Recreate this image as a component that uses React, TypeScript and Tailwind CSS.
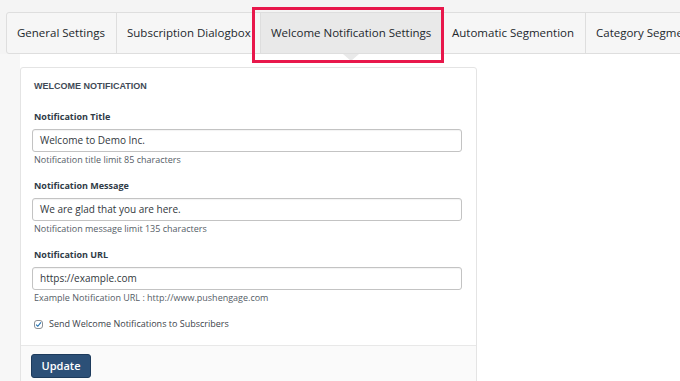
import React from 'react'

const tabs = [
  { label: 'General Settings', w: 'w-[110px]' },
  { label: 'Subscription Dialogbox', w: 'w-[144px]' },
  { label: 'Welcome Notification Settings', w: 'w-[181px]', active: true },
  { label: 'Automatic Segmention', w: 'w-[144px]' },
  { label: 'Category Segmentation', w: 'w-[160px]' },
]

const fields = [
  {
    label: 'Notification Title',
    value: 'Welcome to Demo Inc.',
    help: 'Notification title limit 85 characters',
  },
  {
    label: 'Notification Message',
    value: 'We are glad that you are here.',
    help: 'Notification message limit 135 characters',
  },
  {
    label: 'Notification URL',
    value: 'https://example.com',
    help: 'Example Notification URL : http://www.pushengage.com',
  },
]

export default function App() {
  return (
    <div className="relative w-[680px] h-[381px] overflow-hidden bg-[#f4f4f4] font-['Open_Sans',sans-serif] text-[#23282d]">
      {/* Tabs */}
      <div className="pt-[12px] pl-[6px]">
        <div className="flex h-[42px] w-[700px] border border-[#dedede] rounded-l-[3px] bg-[#f6f6f6]">
          {tabs.map((tab) => (
            <div
              key={tab.label}
              className={`relative flex shrink-0 items-center pl-[10px] border-r border-[#dedede] text-[11.5px] whitespace-nowrap ${tab.w} ${
                tab.active ? 'bg-[#e9e9e9]' : ''
              }`}
            >
              {tab.label}
              {tab.active && (
                <span className="absolute left-1/2 -translate-x-1/2 bottom-[-8px] w-0 h-0 border-l-[8px] border-r-[8px] border-t-[7px] border-l-transparent border-r-transparent border-t-[#e9e9e9]" />
              )}
            </div>
          ))}
        </div>
      </div>

      {/* Highlight box */}
      <div className="absolute left-[252px] top-[7px] w-[192px] h-[56px] border-[3px] border-[#e8174b]" />

      {/* Body */}
      <div className="flex h-full">
        <div className="w-[20px] shrink-0 bg-[#f7f7f7]" />
        <div className="flex-1 bg-white pt-[13px]">
          <div className="w-[457px] border border-[#e4e4e4] rounded-t-[3px] bg-white">
            <div className="pt-[13px] pb-[14px] pl-[11px] pr-[14px] border-b border-[#e8e8e8]">
              <div className="ml-[2px] h-[11px] leading-[11px] text-[9px] font-bold uppercase text-[#3f4a56] font-['Liberation_Sans',Arial,sans-serif]">
                Welcome Notification
              </div>

              {fields.map((f, i) => (
                <div key={f.label} className={i === 0 ? 'mt-[18px]' : 'mt-[13px]'}>
                  <div className="ml-[2px] h-[14px] leading-[14px] text-[9px] font-bold text-[#2f3b47]">
                    {f.label}
                  </div>
                  <div className="mt-[5px] flex items-center h-[23px] w-[430px] border border-[#c3c3c3] rounded-[3px] px-[7px] text-[10px] text-[#32373c] shadow-[inset_0_1px_1px_rgba(0,0,0,0.05)]">
                    {f.value}
                  </div>
                  <div className="ml-[2px] mt-[2px] h-[12px] leading-[12px] text-[9px] text-[#555d66]">
                    {f.help}
                  </div>
                </div>
              ))}

              <div className="mt-[13px] ml-[2px] flex items-center h-[14px] gap-[6px]">
                <span className="flex items-center justify-center w-[9px] h-[9px] rounded-[3px] border border-[#8c8f94] bg-white">
                  <svg viewBox="0 0 10 10" className="w-[7px] h-[7px]">
                    <path d="M1.5 5.2 L4 7.5 L8.5 2" fill="none" stroke="#2271b1" strokeWidth="1.6" />
                  </svg>
                </span>
                <span className="text-[9px] text-[#3c434a]">Send Welcome Notifications to Subscribers</span>
              </div>
            </div>

            <div className="bg-[#fafafa] pt-[6px] pl-[10px] h-[40px]">
              <button className="w-[60px] h-[24px] rounded-[3px] bg-[#2c5077] border border-[#1d3b5c] text-white text-[11px] font-semibold">
                Update
              </button>
            </div>
          </div>
        </div>
      </div>
    </div>
  )
}
